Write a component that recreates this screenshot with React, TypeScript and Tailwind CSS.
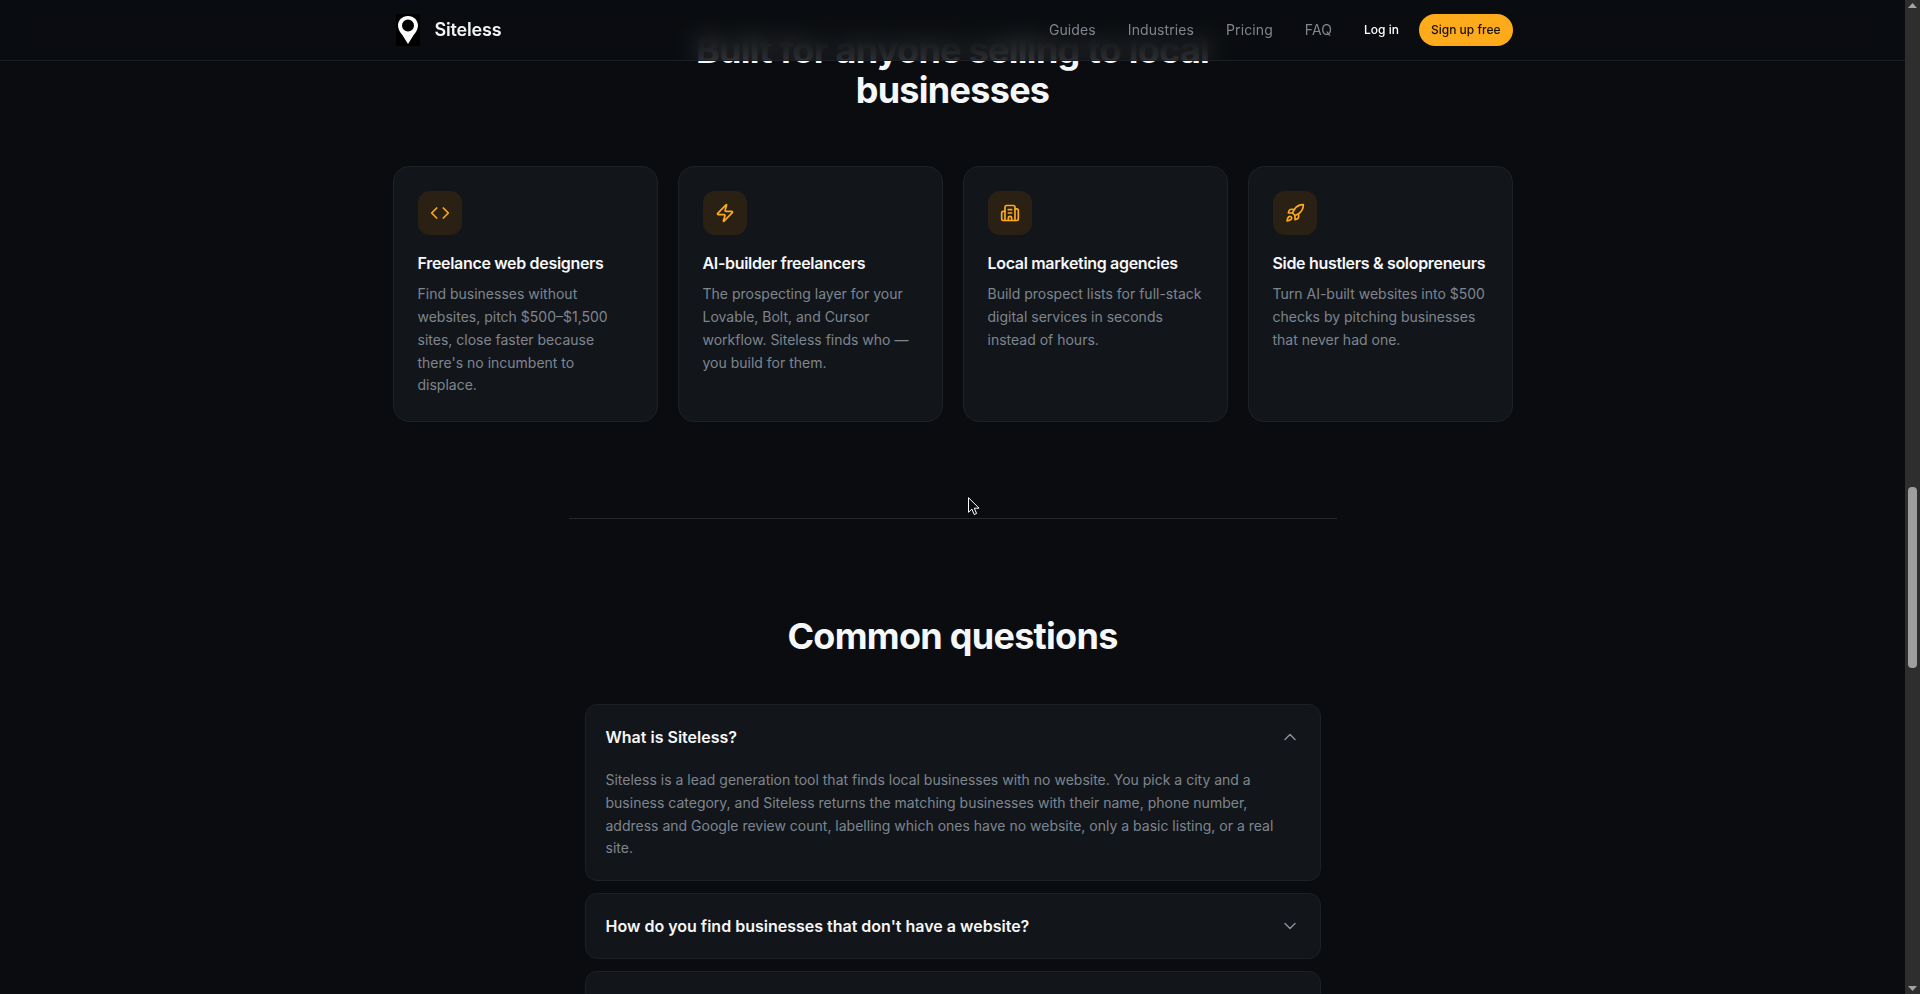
import { Code, Zap, Building2, Rocket, ChevronUp, ChevronDown } from "lucide-react";

const cards = [
  { icon: Code, title: "Freelance web designers", body: "Find businesses without websites, pitch $500–$1,500 sites, close faster because there's no incumbent to displace." },
  { icon: Zap, title: "AI-builder freelancers", body: "The prospecting layer for your Lovable, Bolt, and Cursor workflow. Siteless finds who — you build for them." },
  { icon: Building2, title: "Local marketing agencies", body: "Build prospect lists for full-stack digital services in seconds instead of hours." },
  { icon: Rocket, title: "Side hustlers & solopreneurs", body: "Turn AI-built websites into $500 checks by pitching businesses that never had one." },
];

function Nav() {
  return (
    <header className="fixed left-0 right-[15px] top-0 z-50 h-[61px] border-b border-[#1c1f23] bg-[#0a0c10]/80 backdrop-blur-md">
      <div className="mx-auto flex h-[60px] max-w-[1152px] items-center justify-between px-4">
        <div className="flex items-center gap-[15px] pl-[3px]">
          <div className="flex h-8 w-6 items-center justify-center bg-black">
            <svg viewBox="0 0 24 32" className="h-8 w-6">
              <path fill="#fff" fillRule="evenodd" d="M12 2C6 2 2 6.4 2 11.6c0 3.6 1.9 6.6 4.2 9.2L12 30l5.8-9.2c2.3-2.6 4.2-5.6 4.2-9.2C22 6.4 18 2 12 2Zm0 3.6a6 6 0 1 1 0 12 6 6 0 0 1 0-12Z" />
            </svg>
          </div>
          <span className="-mt-px text-[18px] leading-7 font-semibold tracking-[-0.01em] text-[#f3f4f6]">Siteless</span>
        </div>
        <nav className="flex items-center">
          <div className="flex items-center gap-8 text-sm tracking-[0.1px] text-[#82868c]">
            <span>Guides</span>
            <span>Industries</span>
            <span>Pricing</span>
            <span>FAQ</span>
          </div>
          <span className="ml-[32px] text-xs font-medium text-white">Log in</span>
          <span className="ml-5 flex h-8 items-center rounded-full bg-[#fdab1a] px-3 text-xs font-medium text-[#14100a]">Sign up free</span>
        </nav>
      </div>
    </header>
  );
}

function Faq({ q, open, children }: { q: string; open?: boolean; children?: React.ReactNode }) {
  return (
    <div className="rounded-xl border border-[#1c2126] bg-[#12161b]">
      <div className="flex items-center justify-between px-5 py-5">
        <span className="text-base font-semibold text-[#f6f7f8]">{q}</span>
        {open ? <ChevronUp className="size-5 text-[#8b8f96]" strokeWidth={1.75} /> : <ChevronDown className="size-5 text-[#8b8f96]" strokeWidth={1.75} />}
      </div>
      {children && <p className="px-5 pb-5 text-sm leading-[1.625] text-[#7f858e]">{children}</p>}
    </div>
  );
}

function Scrollbar() {
  return (
    <aside className="flex h-full w-[15px] shrink-0 flex-col items-center bg-[#2e2e2e]">
      <svg viewBox="0 0 9 5" className="mt-[3px] h-[5px] w-[9px]"><path fill="#a3a3a3" d="M4.5 0 9 5H0Z" /></svg>
      <div className="mt-[479px] h-[181px] w-[9px] rounded-[4px] bg-[#9e9e9e]" />
      <svg viewBox="0 0 9 5" className="mb-[3px] mt-auto h-[5px] w-[9px]"><path fill="#a3a3a3" d="M0 0h9L4.5 5Z" /></svg>
    </aside>
  );
}

export default function App() {
  return (
    <div className="flex h-screen overflow-hidden bg-[#0a0c10] font-['Inter',sans-serif]">
      <Nav />
      <div className="relative min-w-0 flex-1">
        <main className="pt-[30.4px]">
          <section className="mx-auto max-w-[1152px] px-4 pb-24">
            <h2 className="mx-auto mb-14 max-w-[560px] text-center text-4xl font-bold tracking-[-0.02em] text-[#f6f7f8]">
              Built for anyone selling to local businesses
            </h2>
            <div className="grid grid-cols-4 gap-5">
              {cards.map((c) => (
                <div key={c.title} className="rounded-2xl border border-[#1d2227] bg-[#12161b] p-6">
                  <div className="mb-4 flex size-11 items-center justify-center rounded-xl bg-[#2a2114]">
                    <c.icon className="size-5 text-[#fdab1a]" strokeWidth={2} />
                  </div>
                  <h3 className="mb-2 text-base font-semibold tracking-[-0.02em] text-[#f6f7f8]">{c.title}</h3>
                  <p className="text-sm leading-[1.625] text-[#7f858e]">{c.body}</p>
                </div>
              ))}
            </div>
          </section>
          <div className="mx-auto h-px max-w-3xl bg-[#24272b]" />
          <section className="mx-auto max-w-3xl px-4 pt-[97px]">
            <h2 className="mb-12 text-center text-4xl font-bold tracking-[-0.02em] text-[#f6f7f8]">Common questions</h2>
            <div className="flex flex-col gap-3">
              <Faq q="What is Siteless?" open>
                Siteless is a lead generation tool that finds local businesses with no website. You pick a city and a business category, and Siteless returns the matching businesses with their name, phone number, address and Google review count, labelling which ones have no website, only a basic listing, or a real site.
              </Faq>
              <Faq q="How do you find businesses that don't have a website?" />
              <Faq q="Can I export the leads?" />
            </div>
          </section>
        </main>
        <svg viewBox="0 0 12 19" className="absolute left-[968px] top-[497px] h-[19px] w-3">
          <path fill="#0a0c10" stroke="#fff" d="M.5.7v14.6l3.4-3.2 2.3 5.4 2.4-1-2.3-5.3h4.8Z" />
        </svg>
      </div>
      <Scrollbar />
    </div>
  );
}
